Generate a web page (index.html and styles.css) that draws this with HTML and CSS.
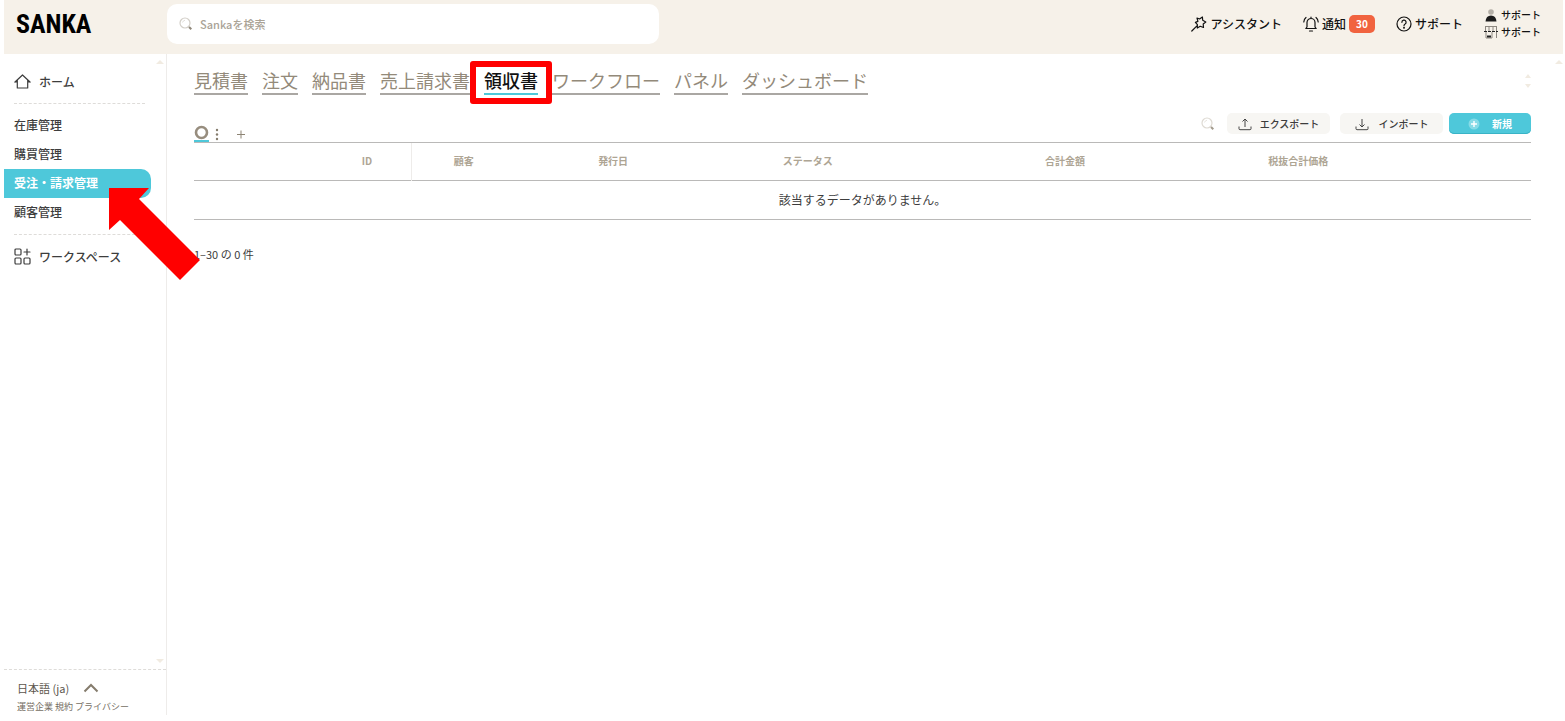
FILE: index.html
```html
<!DOCTYPE html>
<html lang="ja">
<head>
<meta charset="utf-8">
<title>Sanka</title>
<link rel="stylesheet" href="styles.css">
</head>
<body>
<header class="header">
  <a class="logo" href="#">SANKA</a>
  <label class="search">
    <svg class="lens" width="14" height="14" viewBox="0 0 14 14"><circle cx="6" cy="6" r="5" fill="none" stroke="#d3cfc8" stroke-width="1.2"/><path d="M3.500 5.500Q4 3.500 6 3.300" fill="none" stroke="#e2dfda"/><path d="M10 10l2.300 2.300" stroke="#8f8779" stroke-width="2"/></svg>
    <input type="search" aria-label="Sankaを検索" placeholder="Sankaを検索">
  </label>
  <nav class="tools">
    <a class="tool" href="#">
      <svg width="16" height="16" viewBox="0 0 16 16" fill="none" stroke="#111" stroke-width="1.200" stroke-linejoin="round" stroke-linecap="round"><path d="M.8 15l5.400-5.400M6 2l2.600 1 2.800-2 .3 3.300L14.800 6l-2.600 2 .3 3.500-3.300-1.200L6.300 12l.1-3.400-2-2.200 2.500-1z"/></svg>
      アシスタント</a>
    <a class="tool" href="#">
      <svg width="16" height="16" viewBox="0 0 16 16" fill="none" stroke="#111" stroke-width="1.200" stroke-linecap="round" stroke-linejoin="round"><path d="M4 11V6.500a4 4 0 0 1 8 0V11l1.200 1.500H2.800zM6.500 15h3M3 1.500Q1 3 .8 6M13 1.500q2 1.500 2.200 4.500M8 1.200v1"/></svg>
      通知<span class="badge">30</span></a>
    <a class="tool" href="#">
      <svg width="16" height="16" viewBox="0 0 16 16" fill="none" stroke="#111" stroke-width="1.200" stroke-linecap="round"><circle cx="8" cy="8" r="7"/><path d="M5.900 6.300a2.100 2.100 0 1 1 3.200 1.700Q8 8.600 8 9.700"/><circle cx="8" cy="11.800" r=".4" fill="#111"/></svg>
      サポート</a>
    <div class="account">
      <a class="who" href="#"><svg width="14" height="14" viewBox="0 0 14 14"><circle cx="7" cy="4" r="2.800" fill="#b5b0a8"/><path d="M1.500 13.500Q2 7.500 7 7.500T12.500 13.500z" fill="#1c1c1c"/></svg>サポート</a>
      <a class="who" href="#"><svg width="14" height="14" viewBox="0 0 14 14" fill="none"><path d="M1 1.500h12M1.500 1.500v5M5 1.500v5M9 1.500v5M12.500 1.500V13M2 7v6h6V7" stroke="#8c8780"/><path d="M0 6.500h14" stroke="#222" stroke-dasharray="3 1"/><path d="M3 11.500h4" stroke="#222" stroke-width="2"/></svg>サポート</a>
    </div>
  </nav>
</header>
<div class="body">
  <aside class="sidebar">
    <nav class="menu">
      <a class="item iconed" href="#"><svg width="17" height="17" viewBox="0 0 17 17" fill="none" stroke="#3d3d3d" stroke-width="1.200" stroke-linejoin="round" stroke-linecap="round"><path d="M1 9l7.500-7L16 9M3.300 7v8h10.400V7M.8 9h2.500M13.700 9h2.500"/></svg>ホーム</a>
      <hr class="dash">
      <a class="item" href="#">在庫管理</a>
      <a class="item" href="#">購買管理</a>
      <a class="item current" href="#">受注・請求管理</a>
      <a class="item" href="#">顧客管理</a>
      <hr class="dash">
      <a class="item iconed" href="#"><svg width="17" height="17" viewBox="0 0 17 17" fill="none" stroke="#3d3d3d" stroke-width="1.200" stroke-linecap="round"><rect x="1" y="1" width="6" height="6" rx="1"/><rect x="1" y="10" width="6" height="6" rx="1"/><rect x="10" y="10" width="6" height="6" rx="1"/><path d="M13 1v6M10 4h6"/></svg>ワークスペース</a>
    </nav>
    <div class="foot">
      <button class="lang" type="button">日本語 (ja)<svg width="16" height="10" viewBox="0 0 16 10" fill="none" stroke="#857c6d" stroke-width="2"><path d="M1.500 8.500L8 2l6.500 6.500"/></svg></button>
      <p class="legal"><a href="#">運営企業</a> <a href="#">規約</a> <a href="#">プライバシー</a></p>
    </div>
    <i class="tri up side-top"></i><i class="tri down side-end"></i>
  </aside>
  <main class="main">
    <nav class="tabs">
      <a class="tab" href="#">見積書</a>
      <a class="tab" href="#">注文</a>
      <a class="tab" href="#">納品書</a>
      <a class="tab" href="#">売上請求書</a>
      <a class="tab active" href="#">領収書</a>
      <a class="tab" href="#">ワークフロー</a>
      <a class="tab" href="#">パネル</a>
      <a class="tab" href="#">ダッシュボード</a>
      <span class="spin"><i class="tri up"></i><i class="tri down"></i></span>
    </nav>
    <div class="bar">
      <div class="views">
        <button class="view" type="button" aria-label="ビュー"><svg width="15" height="15" viewBox="0 0 15 15" fill="none"><circle cx="7.500" cy="7.500" r="5.500" stroke="#978d7e" stroke-width="2.600"/></svg></button>
        <button class="plain" type="button" aria-label="メニュー"><svg width="4" height="14" viewBox="0 0 4 14" fill="#857c6d"><circle cx="2" cy="3" r="1.200"/><circle cx="2" cy="7.500" r="1.200"/><circle cx="2" cy="12" r="1.200"/></svg></button>
        <button class="plain add" type="button" aria-label="追加"><svg width="10" height="14" viewBox="0 0 10 14" stroke="#8d8474"><path d="M1 7.500h8M5 3.500v8"/></svg></button>
      </div>
      <div class="actions">
        <button class="plain find" type="button" aria-label="検索"><svg width="14" height="14" viewBox="0 0 14 14"><circle cx="6" cy="6" r="5" fill="none" stroke="#dedad3" stroke-width="1.200"/><path d="M3.500 5.500Q4 3.500 6 3.300" fill="none" stroke="#e8e5e0"/><path d="M10 10l2.300 2.300" stroke="#a39b8d" stroke-width="2"/></svg></button>
        <button class="btn" type="button"><svg width="14" height="14" viewBox="0 0 14 14" fill="none" stroke="#444"><path d="M1 9.500v2.200q0 1 1 1h10q1 0 1-1V9.500M7 10V2M4.500 4.500L7 2l2.500 2.500"/></svg>エクスポート</button>
        <button class="btn" type="button"><svg width="14" height="14" viewBox="0 0 14 14" fill="none" stroke="#444"><path d="M1 9.500v2.200q0 1 1 1h10q1 0 1-1V9.500M7 2v8M4.500 7.500L7 10l2.500-2.500"/></svg>インポート</button>
        <button class="btn new" type="button"><svg width="12" height="12" viewBox="0 0 12 12"><circle cx="6" cy="6" r="5.500" fill="#86dbe7"/><path d="M3 6h6M6 3v6" stroke="#fff" stroke-width="1.400"/></svg>新規</button>
      </div>
    </div>
    <table class="grid">
      <colgroup><col class="c1"><col class="c2"><col class="c3"><col class="c4"><col class="c5"><col class="c6"><col class="c7"><col></colgroup>
      <thead><tr><td></td><th class="id">ID</th><th>顧客</th><th>発行日</th><th>ステータス</th><th>合計金額</th><th>税抜合計価格</th><td></td></tr></thead>
      <tbody><tr><td colspan="8">該当するデータがありません。</td></tr></tbody>
    </table>
    <p class="count">1–30 の 0 件</p>
    <i class="tri up main-top"></i>
  </main>
  <svg class="arrow" width="91" height="92" viewBox="0 0 91 92"><path d="M0 0h40L30 11l61 61-20 20L11 32 0 42z" fill="#f00"/></svg>
</div>
</body>
</html>
```
FILE: styles.css
```css
* { box-sizing: border-box; }
body {
  margin: 0;
  padding: 0 2px 6px 4px;
  height: 100vh;
  display: flex;
  flex-direction: column;
  background: #fff;
  color: #3d3d3d;
  font: 12px/16px "Noto Sans CJK JP", sans-serif;
}
a { color: inherit; text-decoration: none; }
button { font: inherit; color: inherit; border: 0; background: none; padding: 0; cursor: pointer; }
svg { display: block; flex: none; }

.header { display: flex; height: 54px; background: #f6f1e9; flex: none; }
.logo {
  width: 163px;
  padding: 4px 0 0 12px;
  font: bold 26px/40px "Roboto Condensed", Roboto, sans-serif;
  color: #000;
  flex: none;
}
.search {
  display: flex;
  align-items: center;
  gap: 7px;
  flex: 0 1 492px;
  height: 40px;
  margin-top: 4px;
  padding: 0 12px;
  border-radius: 10px;
  background: #fff;
}
.search input { flex: 1; border: 0; outline: 0; padding: 0; font: 500 11px/16px "Noto Sans CJK JP", sans-serif; background: none; }
.search input::placeholder { color: #aaa396; opacity: 1; }
.tools { display: flex; align-items: center; gap: 21px; height: 48px; margin-left: auto; padding-right: 22px; color: #111; font-weight: 500; }
.tool { display: flex; align-items: center; gap: 3px; white-space: nowrap; }
.badge { width: 26px; border-radius: 5px; background: #f1633f; color: #fff; font: bold 10px/18px "Noto Sans CJK JP", sans-serif; text-align: center; }
.account { display: grid; gap: 1px; padding-bottom: 2px; font-size: 10px; }
.who { display: flex; align-items: center; gap: 3px; }

.body { position: relative; display: flex; flex: 1; min-height: 0; }
.sidebar { position: relative; display: flex; flex-direction: column; justify-content: space-between; width: 163px; border-right: 1px solid #eeecea; flex: none; }
.menu { padding-top: 13px; }
.item { display: flex; align-items: center; height: 29px; padding: 0 0 2px 10px; margin-right: 15px; font-weight: 500; }
.iconed { gap: 8px; padding-bottom: 0; }
.current { border-radius: 0 10px 10px 0; background: #4ec8da; color: #fff; font-weight: bold; }
.dash { margin: 7px 21px 7px 10px; border: 0; border-top: 1px dashed #dedcd9; }
.foot { border-top: 1px dashed #dedcd9; padding: 10px 0 1px 13px; }
.lang { display: flex; align-items: center; gap: 14px; font-size: 11px; line-height: 16px; color: #5c564d; }
.legal { margin: 4px 0 0; font-size: 9px; line-height: 14px; color: #756e63; }

.main { position: relative; flex: 1; min-width: 0; padding: 13px 32px 0 27px; }
.tabs { display: flex; gap: 14px; }
.tab { border-bottom: 2px solid #aaa7a3; font-size: 18px; line-height: 26px; color: #938a7a; white-space: nowrap; }
.active { position: relative; border-color: #4ec8da; color: #111; font-weight: 500; }
.active::after { content: ""; position: absolute; inset: -6px -14px -11px; border: 6px solid #f00; border-radius: 3px; }
.spin { display: grid; align-content: space-evenly; margin-left: auto; }

.bar { display: flex; justify-content: space-between; align-items: flex-end; height: 48px; border-bottom: 1px solid #bab9b8; }
.views { display: flex; gap: 6px; }
.view { border-bottom: 2px solid #4ec8da; }
.add { margin-left: 11px; }
.actions { display: flex; align-items: center; gap: 10px; padding-bottom: 8px; }
.find { margin-right: 2px; }
.btn { display: flex; align-items: center; justify-content: center; gap: 8px; width: 103px; height: 21px; border-radius: 5px; background: #f7f6f3; font-size: 10px; font-weight: 500; }
.btn + .btn { gap: 10px; }
.btn.new { width: 82px; margin-left: -4px; gap: 12px; background: #4ec8da; color: #fff; font-weight: bold; box-shadow: inset 0 -1px #39b3c6; }

.grid { width: 100%; border-collapse: collapse; table-layout: fixed; }
.grid tr { height: 37px; border-bottom: 1px solid #bab9b8; }
.grid tbody tr { height: 39px; }
.grid td, .grid th { padding: 0; text-align: center; }
.grid th { font-size: 10px; color: #aea594; }
.grid td { font-size: 12px; }
.id { border-right: 1px solid #eeecea; }
.c1 { width: 9.6%; }
.c2 { width: 6.7%; }
.c3 { width: 7.7%; }
.c4 { width: 14.7%; }
.c5 { width: 14.4%; }
.c6 { width: 24.1%; }
.c7 { width: 10.8%; }
.count { margin: 25px 0 0; font-size: 11px; line-height: 18px; }

.tri { display: block; border: 4px solid transparent; }
.up { border-top: 0; border-bottom-color: #f1ebe1; }
.down { border-bottom: 0; border-top-color: #f1ebe1; }
.spin .tri { border-left-width: 3px; border-right-width: 3px; }
.side-top { position: absolute; top: 6px; right: 2px; }
.side-end { position: absolute; bottom: 52px; right: 2px; }
.main-top { position: absolute; top: 6px; right: 0; }
.arrow { position: absolute; left: 105px; top: 134px; }
```
